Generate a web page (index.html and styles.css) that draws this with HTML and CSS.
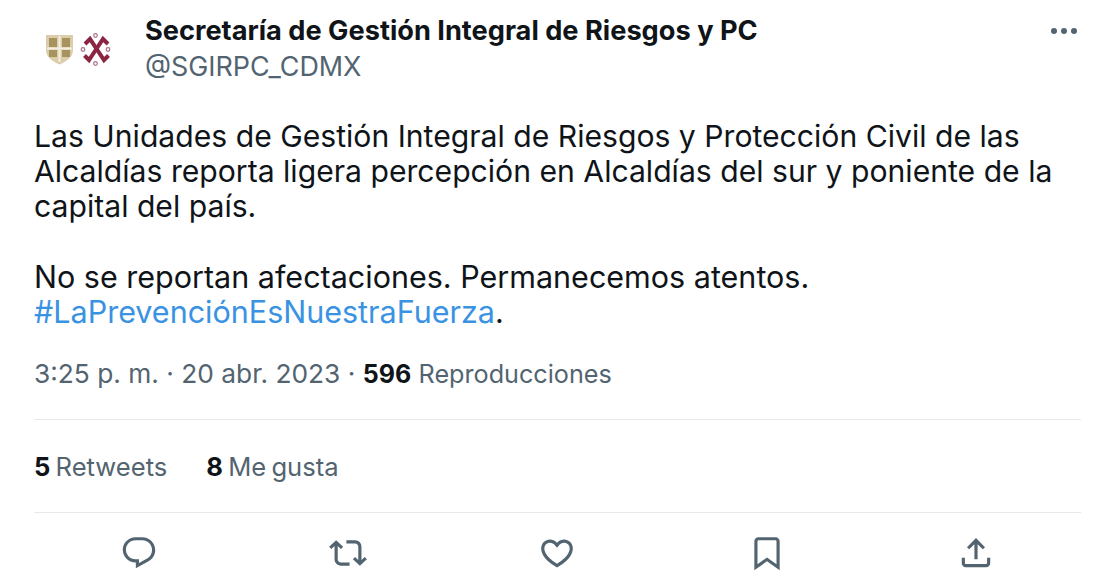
FILE: index.html
```
<!DOCTYPE html>
<html>
    <head>
        <meta charset="UTF-8">
        <title>Tweet</title>
        <link rel="stylesheet" href="styles.css">
    </head>
    <body>
        <div class="tweet">
            <div class="tweet-head">
                <svg class="avatar" viewBox="0 0 90 90">
                    <path d="M12 29h27v15c0 7-6 11-13.500 14.500C18 55 12 51 12 44z" fill="#dccdaa"/>
                    <path d="M15 32h8v9h-8zM28 32h8v9h-8zM15 44h8v7h-8zM28 44h8v7h-8z" fill="#a8935f"/>
                    <path d="M24.500 30h2v26h-2zM13 41.500h25v2H13z" fill="#f3eee2"/>
                    <g fill="none" stroke="#8c2443" stroke-width="4">
                        <path d="M51 38l5-5 14 21 4.500-4.500"/>
                        <path d="M74 38l-5-5-14 21-4.500-4.500"/>
                    </g>
                    <g fill="none" stroke="#a8708a" stroke-width="1.200">
                        <circle cx="61.500" cy="29.500" r="1.800"/>
                        <circle cx="61.500" cy="57.500" r="1.800"/>
                        <circle cx="49" cy="43.500" r="1.800"/>
                        <circle cx="74" cy="43.500" r="1.800"/>
                    </g>
                </svg>
                <div class="names">
                    <div class="name">Secretaría de Gestión Integral de Riesgos y PC</div>
                    <div class="handle">@SGIRPC_CDMX</div>
                </div>
                <div class="more"><span></span><span></span><span></span></div>
            </div>
            <div class="tweet-text">
                <p>Las Unidades de Gestión Integral de Riesgos y Protección Civil de las Alcaldías reporta ligera percepción en Alcaldías del sur y poniente de la capital del país.</p>
                <p class="second">No se reportan afectaciones. Permanecemos atentos.<br><a href="#">#LaPrevenciónEsNuestraFuerza</a>.</p>
            </div>
            <div class="tweet-meta">3:25 p. m. · 20 abr. 2023 · <b>596</b> <span class="small">Reproducciones</span></div>
            <div class="tweet-stats">
                <span><b>5</b> Retweets</span>
                <span><b>8</b> Me gusta</span>
            </div>
            <div class="tweet-actions">
                <svg viewBox="0 0 24 24"><path d="M1.751 10c0-4.42 3.584-8 8.005-8h4.366c4.49 0 8.129 3.64 8.129 8.13 0 2.96-1.607 5.68-4.196 7.11l-8.054 4.46v-3.690h-.067c-4.49.1-8.183-3.51-8.183-8.010zm8.005-6c-3.317 0-6.005 2.690-6.005 6 0 3.370 2.770 6.080 6.138 6.010l.351-.010h1.761v2.300l5.087-2.810c1.951-1.080 3.163-3.130 3.163-5.360 0-3.390-2.744-6.130-6.129-6.130H9.756z"/></svg>
                <svg viewBox="0 0 24 24"><path d="M4.500 3.880l4.432 4.140-1.364 1.460L5.500 7.550V16c0 1.100.896 2 2 2H13v2H7.500c-2.209 0-4-1.790-4-4V7.550L1.432 9.480.068 8.020 4.500 3.880zM16.500 6H11V4h5.500c2.209 0 4 1.790 4 4v8.450l2.068-1.930 1.364 1.460-4.432 4.140-4.432-4.140 1.364-1.460 2.068 1.930V8c0-1.100-.896-2-2-2z"/></svg>
                <svg viewBox="0 0 24 24"><path d="M16.697 5.500c-1.222-.060-2.679.510-3.890 2.160l-.805 1.090-.806-1.090C9.984 6.010 8.526 5.440 7.304 5.500c-1.243.070-2.349.780-2.910 1.910-.552 1.120-.633 2.780.479 4.820 1.074 1.970 3.257 4.270 7.129 6.610 3.870-2.340 6.052-4.640 7.126-6.610 1.111-2.040 1.030-3.700.477-4.820-.561-1.130-1.666-1.840-2.908-1.910zm4.187 7.690c-1.351 2.480-4.001 5.120-8.379 7.670l-.503.300-.504-.300c-4.379-2.550-7.029-5.190-8.382-7.670-1.360-2.500-1.410-4.860-.514-6.670.887-1.790 2.647-2.910 4.601-3.010 1.651-.090 3.368.560 4.798 2.010 1.429-1.450 3.146-2.100 4.796-2.010 1.954.100 3.714 1.220 4.601 3.010.896 1.810.846 4.170-.514 6.670z"/></svg>
                <svg viewBox="0 0 24 24"><path d="M4 4.500C4 3.120 5.119 2 6.500 2h11C18.881 2 20 3.120 20 4.500v18.440l-8-5.710-8 5.710V4.500zM6.500 4c-.276 0-.5.220-.5.500v14.560l6-4.290 6 4.290V4.500c0-.280-.224-.500-.500-.500h-11z"/></svg>
                <svg viewBox="0 0 24 24"><path d="M12 2.590l5.700 5.700-1.410 1.420L13 6.410V16h-2V6.410l-3.300 3.300-1.410-1.420L12 2.590zM21 15l-.020 3.510c0 1.380-1.120 2.490-2.500 2.490H5.500C4.110 21 3 19.880 3 18.500V15h2v3.500c0 .280.220.500.500.500h12.980c.280 0 .500-.220.500-.500L19 15h2z"/></svg>
            </div>
        </div>
    </body>
</html>
```

FILE: styles.css
```
html {
    background-color: #fff;
}

body {
    margin: 0;
    height: 581px;
    overflow: hidden;
    font-family: Inter, "Liberation Sans", sans-serif;
    color: #0f1419;
}

.tweet {
    padding: 0 39px 0 34px;
}

.tweet-head {
    display: flex;
    align-items: flex-start;
    height: 82px;
    padding-top: 10px;
}

.avatar {
    width: 90px;
    height: 90px;
    margin-right: 21px;
    margin-top: -4px;
}

.names {
    margin-top: 2px;
}

.name {
    font-size: 27.200px;
    font-weight: 700;
    line-height: 38px;
}

.handle {
    font-size: 26.900px;
    line-height: 32px;
    color: #536471;
}

.more {
    display: flex;
    gap: 4px;
    margin-left: auto;
    margin-top: 18px;
    margin-right: 4px;
}

.more span {
    width: 6px;
    height: 6px;
    border-radius: 50%;
    background-color: #536471;
}

.tweet-text {
    margin-top: 27px;
    font-size: 30.150px;
    line-height: 35px;
}

.tweet-text p {
    margin: 0 0 35px 0;
}

.tweet-text .second {
    font-size: 30.500px;
}

.tweet-text a {
    color: #3a92e2;
    text-decoration: none;
}

.tweet-meta {
    margin-top: -8px;
    padding-bottom: 27px;
    font-size: 26.300px;
    line-height: 36px;
    color: #536471;
    border-bottom: 1px solid #e7eaec;
}

.tweet-meta b {
    font-size: 25px;
    color: #0f1419;
}

.small {
    font-size: 25.200px;
}

.tweet-stats {
    display: flex;
    gap: 39px;
    height: 92px;
    align-items: center;
    font-size: 25.600px;
    word-spacing: -2px;
    color: #536471;
    border-bottom: 1px solid #e7eaec;
}

.tweet-stats b {
    color: #0f1419;
}

.tweet-actions {
    display: flex;
    justify-content: space-around;
    padding-top: 21px;
}

.tweet-actions svg {
    width: 38px;
    height: 38px;
    fill: #536471;
}
```
